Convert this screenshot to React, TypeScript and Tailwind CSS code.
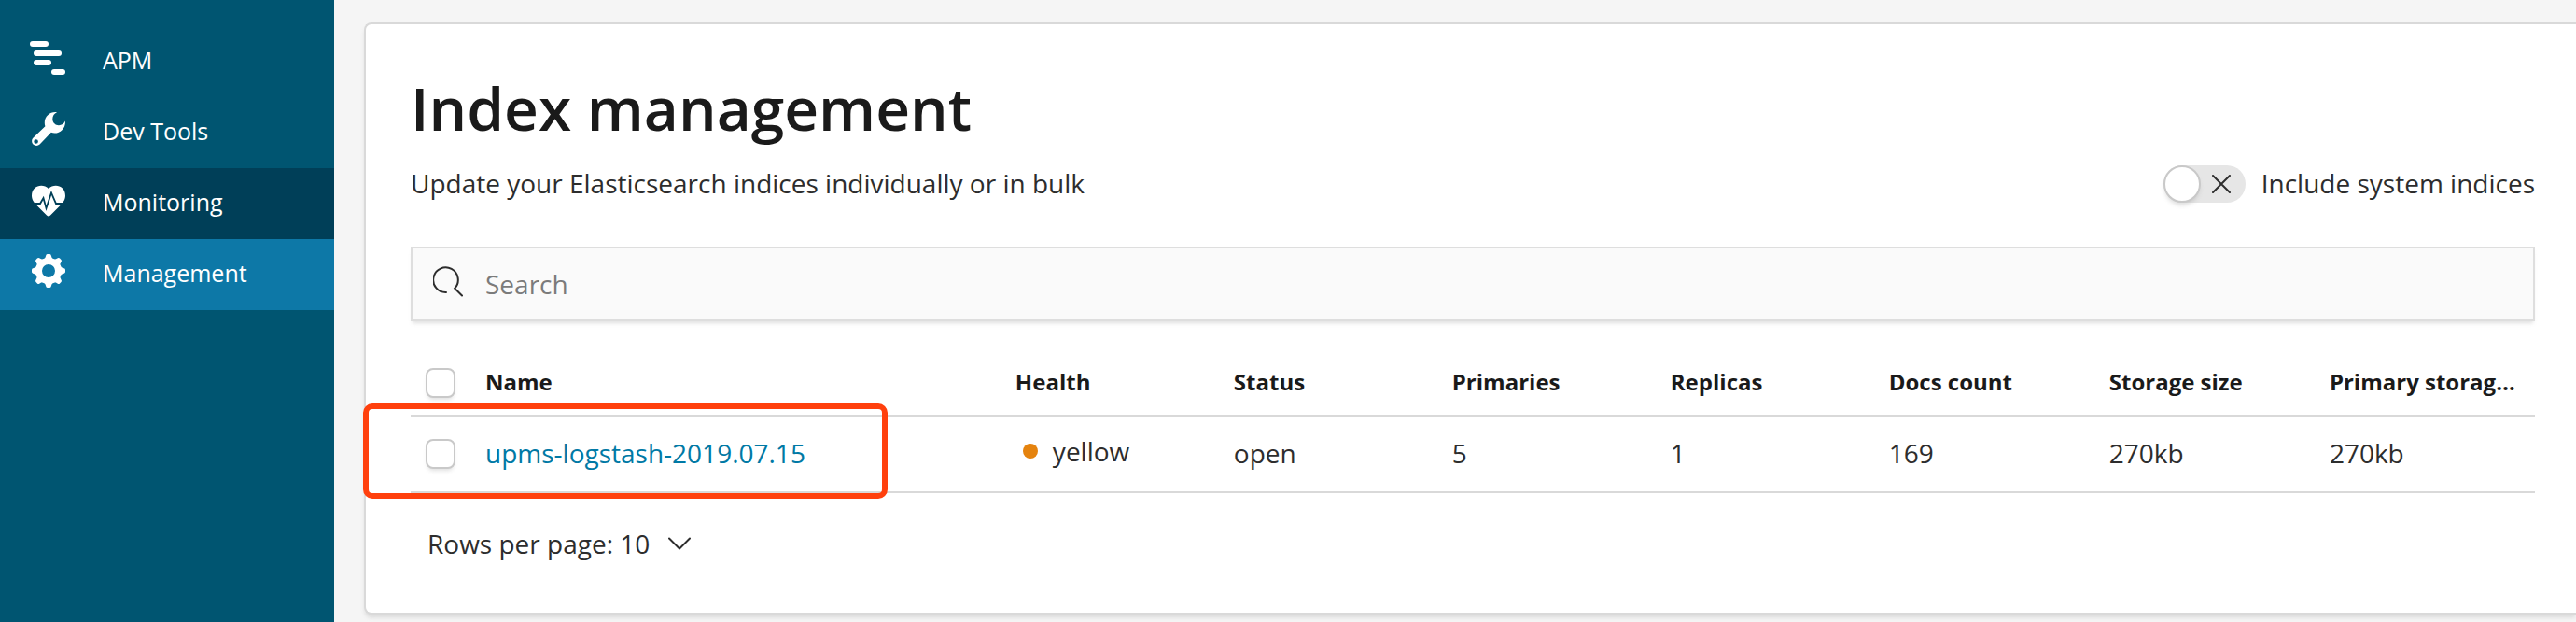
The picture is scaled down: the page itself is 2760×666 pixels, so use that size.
import { useState } from "react";
import type { ReactNode } from "react";

type NavItem = { label: string; icon: ReactNode; className: string };

const NAV_ITEMS: NavItem[] = [
  { label: "APM", icon: <ApmIcon />, className: "" },
  { label: "Dev Tools", icon: <WrenchIcon />, className: "" },
  { label: "Monitoring", icon: <HeartIcon />, className: "bg-[#003f58]" },
  { label: "Management", icon: <GearIcon />, className: "bg-[#0d78a7]" },
];

const COLUMNS = [
  { label: "Name", width: "w-[24.95%]" },
  { label: "Health", width: "w-[10.28%]" },
  { label: "Status", width: "w-[10.28%]" },
  { label: "Primaries", width: "w-[10.28%]" },
  { label: "Replicas", width: "w-[10.28%]" },
  { label: "Docs count", width: "w-[10.37%]" },
  { label: "Storage size", width: "" },
  { label: "Primary storage size", width: "" },
];

const INDICES = [
  {
    name: "upms-logstash-2019.07.15",
    health: "yellow",
    status: "open",
    primaries: 5,
    replicas: 1,
    docs: 169,
    size: "270kb",
    primarySize: "270kb",
  },
];

function ApmIcon() {
  return (
    <svg viewBox="0 0 40 40" className="size-10 fill-white" aria-hidden="true">
      <rect x="0" y="2" width="20" height="6" rx="3" />
      <rect x="4" y="12" width="30" height="6" rx="3" />
      <rect x="4" y="22" width="19" height="6" rx="3" />
      <rect x="23" y="32" width="15" height="6" rx="3" />
    </svg>
  );
}

function WrenchIcon() {
  return (
    <svg viewBox="0 0 40 40" className="size-10 fill-white" aria-hidden="true">
      <path
        fillRule="evenodd"
        d="M29 2.2C22 1.2 15.6 6.500 15.800 13.500C15.800 15 16 16 16.400 17.200L3.600 29.400A5 5 0 1 0 10.600 36.600L22.800 23.800C30 26.500 38.500 21 38 11.600C36.500 14.500 34 16.200 31 16.200C27.500 16.200 24.300 13.500 24.300 9.500C24.300 6 26 3.600 29 2.200ZM6.600 31.200a2.300 2.300 0 1 1 0 4.600a2.300 2.300 0 0 1 0-4.600Z"
      />
    </svg>
  );
}

function HeartIcon() {
  return (
    <svg viewBox="0 0 40 40" className="size-10" aria-hidden="true">
      <path
        className="fill-white"
        d="M20 8C14 2 2 4.500 2 15.500C2 20 4.500 23 7.500 26L18 36.500Q20 38.500 22 36.500L32.500 26C35.500 23 38 20 38 15.500C38 4.500 26 2 20 8Z"
      />
      <path
        className="fill-none stroke-[#003f58]"
        strokeWidth="1.800"
        d="M4 24H11L14.500 18L17.500 29L23 12.500L28 24H36"
      />
    </svg>
  );
}

function GearIcon() {
  const teeth = [0, 45, 90, 135, 180, 225, 270, 315];
  return (
    <svg viewBox="0 0 40 40" className="size-10 fill-white" aria-hidden="true">
      <path
        fillRule="evenodd"
        d="M20 6a14 14 0 1 1 0 28a14 14 0 0 1 0-28ZM20 13a7 7 0 1 0 0 14a7 7 0 0 0 0-14Z"
      />
      {teeth.map((angle) => (
        <path
          key={angle}
          d="M14.500 8Q16.800 6.500 17.300 3.300Q17.600 2 19 2H21Q22.400 2 22.700 3.300Q23.200 6.500 25.500 8L23 10H17Z"
          transform={`rotate(${angle} 20 20)`}
        />
      ))}
    </svg>
  );
}

function Sidebar() {
  return (
    <nav className="w-[358px] shrink-0 bg-[#005571] pt-7">
      {NAV_ITEMS.map((item) => (
        <a
          key={item.label}
          href="#"
          className={`flex h-19 items-center text-[25px] text-white ${item.className}`}
        >
          <span className="flex w-[110px] shrink-0 pb-2 pl-8">{item.icon}</span>
          <span className="pb-1">{item.label}</span>
        </a>
      ))}
    </nav>
  );
}

function Checkbox({ label }: { label: string }) {
  return (
    <input
      type="checkbox"
      aria-label={label}
      className="block size-8 appearance-none rounded-lg border-2 border-[#c9c9c9] bg-white shadow-[0_4px_4px_-2px_rgba(153,153,153,0.3)] checked:bg-[#0079a5]"
    />
  );
}

function SystemSwitch() {
  const [on, setOn] = useState(false);
  return (
    <label className="flex items-center gap-[17px]">
      <button
        type="button"
        role="switch"
        aria-checked={on}
        aria-label="Include system indices"
        onClick={() => setOn(!on)}
        className={`flex h-10 w-[88px] items-center rounded-full bg-[#e6e6e6] ${on ? "flex-row-reverse" : ""}`}
      >
        <span className="size-10 rounded-full border-2 border-[#c9c9c9] bg-white shadow-[0_4px_4px_-1px_rgba(153,153,153,0.3)]" />
        <svg viewBox="0 0 20 20" className="mx-3 size-5 stroke-[#2d2d2d]" aria-hidden="true">
          <path strokeWidth="2" strokeLinecap="round" d="M1 1L19 19M19 1L1 19" />
        </svg>
      </button>
      <span className="pb-0.5">Include system indices</span>
    </label>
  );
}

function SearchBox() {
  return (
    <label className="mt-[46px] flex h-20 items-center border-2 border-[#dedede] bg-[#fafafa] pl-[22px] shadow-[0_4px_4px_-2px_rgba(153,153,153,0.3)]">
      <svg viewBox="0 0 34 34" className="mr-[22px] mb-1 size-[34px] shrink-0 fill-none stroke-[#2d2d2d]" aria-hidden="true">
        <path
          strokeWidth="2"
          strokeLinecap="round"
          d="M14 28A13.300 13.300 0 1 1 23.200 23.800L31 31.500"
        />
      </svg>
      <input
        type="search"
        aria-label="Search"
        placeholder="Search"
        className="h-full min-w-0 flex-1 bg-transparent outline-none placeholder:text-[#7b7b7b]"
      />
    </label>
  );
}

function IndexTable() {
  return (
    <div className="relative mt-[34px]">
      <table className="w-full table-fixed border-separate border-spacing-0 text-left">
        <colgroup>
          <col className="w-16" />
          {COLUMNS.map((col) => (
            <col key={col.label} className={col.width} />
          ))}
        </colgroup>
        <thead>
          <tr className="h-[68px] text-2xl leading-10 text-[#1a1a1a] *:border-b-2 *:border-[#d9d9d9]">
            <th className="pb-0.5 pl-4">
              <Checkbox label="Select all indices" />
            </th>
            {COLUMNS.map((col) => (
              <th key={col.label} className="truncate px-4 pb-1 font-bold">
                {col.label}
              </th>
            ))}
          </tr>
        </thead>
        <tbody>
          {INDICES.map((index) => (
            <tr key={index.name} className="h-[82px] *:border-b-2 *:border-[#d9d9d9]">
              <td className="pl-4">
                <Checkbox label={`Select ${index.name}`} />
              </td>
              <td className="truncate px-4 pb-0.5">
                <a href="#" className="text-[#0079a5]">
                  {index.name}
                </a>
              </td>
              <td className="px-4 pb-1.5">
                <span className="flex items-center gap-4 pl-2">
                  <span className="size-4 rounded-full bg-[#e5830e]" />
                  {index.health}
                </span>
              </td>
              <td className="px-4 pb-0.5">{index.status}</td>
              <td className="px-4 pb-0.5">{index.primaries}</td>
              <td className="px-4 pb-0.5">{index.replicas}</td>
              <td className="px-4 pb-0.5">{index.docs}</td>
              <td className="px-4 pb-0.5">{index.size}</td>
              <td className="px-4 pb-0.5">{index.primarySize}</td>
            </tr>
          ))}
        </tbody>
      </table>
      {/* Highlight drawn over the first row */}
      <div className="pointer-events-none absolute top-[54px] -left-[51px] h-[102px] w-[562px] rounded-[10px] border-6 border-[#ff400d]" />
    </div>
  );
}

export default function App() {
  return (
    <div className="flex min-h-screen overflow-hidden bg-[#f5f5f5] font-['Open_Sans',sans-serif] text-[28px] leading-10 text-[#2d2d2d]">
      <Sidebar />
      <main className="min-w-0 flex-1 pt-6 pb-2 pl-8">
        <section className="h-full rounded-l-lg border-y-2 border-l-2 border-[#d9d9d9] bg-white pt-[50px] pr-11 pl-12 shadow-[0_4px_4px_-1px_rgba(153,153,153,0.3)]">
          <h1 className="text-[64px] leading-20 font-semibold text-[#1a1a1a]">Index management</h1>
          <div className="mt-5 flex items-center justify-between">
            <p className="pb-0.5">Update your Elasticsearch indices individually or in bulk</p>
            <SystemSwitch />
          </div>
          <SearchBox />
          <IndexTable />
          <button type="button" className="mt-[34px] ml-[18px] flex items-center gap-5">
            Rows per page: 10
            <svg viewBox="0 0 24 14" className="size-6 fill-none stroke-[#2d2d2d]" aria-hidden="true">
              <path strokeWidth="2" strokeLinecap="round" strokeLinejoin="round" d="M1 1.500L12 12.500L23 1.500" />
            </svg>
          </button>
        </section>
      </main>
    </div>
  );
}
